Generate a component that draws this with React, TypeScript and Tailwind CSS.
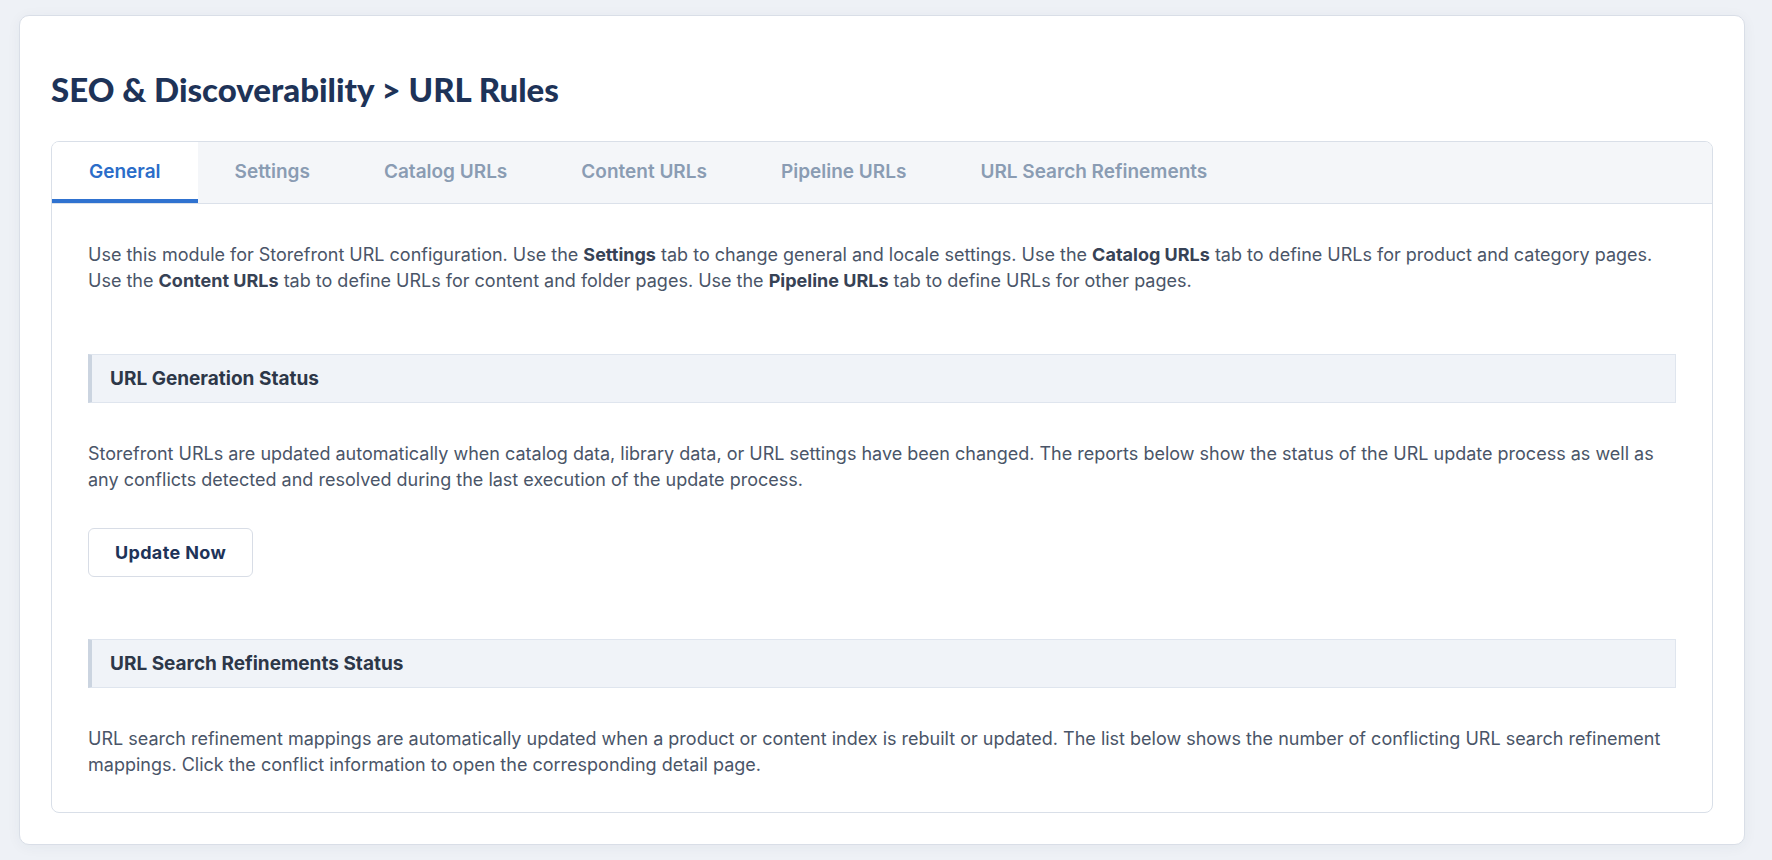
import { useState } from 'react';

const tabs = ['General', 'Settings', 'Catalog URLs', 'Content URLs', 'Pipeline URLs', 'URL Search Refinements'];

function SectionHeader({ title, className = '' }: { title: string; className?: string }) {
  return (
    <div
      className={`flex h-[49px] items-center border border-l-4 border-[#dfe5ee] border-l-[#cbd4e0] bg-[#f0f3f8] pl-[18px] text-[19px] font-bold text-[#2d3748] ${className}`}
    >
      {title}
    </div>
  );
}

function B({ children }: { children: React.ReactNode }) {
  return <span className="font-bold text-[#374255]">{children}</span>;
}

export default function App() {
  const [active, setActive] = useState(0);

  return (
    <div className="min-h-screen bg-[#eef1f6] pb-[16px] pl-[19px] pr-[27px] pt-[15px] font-['Inter',sans-serif]">
      <div className="rounded-[10px] border border-[#d9dee7] bg-white px-[31px] pb-[31px] pt-[53px] shadow-[0_2px_14px_rgba(30,51,88,0.05)]">
        <h1 className="mb-[32px] font-['Lato',sans-serif] text-[33px] font-black leading-[40px] text-[#1e3358]">
          SEO &amp; Discoverability &gt; URL Rules
        </h1>

        <div className="overflow-hidden rounded-[8px] border border-[#d9dfe8]">
          {/* tab strip */}
          <div className="flex border-b border-[#dbe1ea] bg-[#f4f6f9]">
            {tabs.map((tab, i) => (
              <button
                key={tab}
                onClick={() => setActive(i)}
                className={`relative flex h-[61px] items-center px-[37px] text-[19px] font-semibold ${
                  i === active ? 'bg-white text-[#2b6dc9]' : 'text-[#8a9cb3] hover:text-[#6b7f99]'
                }`}
              >
                {tab}
                {i === active && <span className="absolute bottom-0 left-0 right-0 h-[4px] bg-[#2f72d0]" />}
              </button>
            ))}
          </div>

          <div className="px-[36px] pb-[34px] pt-[38px] text-[18px] leading-[26px] text-[#4a5568]">
            <p>
              Use this module for Storefront URL configuration. Use the <B>Settings</B> tab to change general and
              locale settings. Use the <B>Catalog URLs</B> tab to define URLs for product and category pages. Use the{' '}
              <B>Content URLs</B> tab to define URLs for content and folder pages. Use the <B>Pipeline URLs</B> tab to
              define URLs for other pages.
            </p>

            <SectionHeader title="URL Generation Status" className="mt-[60px]" />
            <p className="mt-[38px]">
              Storefront URLs are updated automatically when catalog data, library data, or URL settings have been
              changed. The reports below show the status of the URL update process as well as any conflicts detected
              and resolved during the last execution of the update process.
            </p>
            <button className="mt-[35px] flex h-[49px] w-[165px] items-center justify-center rounded-[6px] border-[1.5px] border-[#d8dde6] bg-white text-[18px] font-bold tracking-[0.02em] text-[#1e3358] hover:bg-[#f7f9fc]">
              Update Now
            </button>

            <SectionHeader title="URL Search Refinements Status" className="mt-[62px]" />
            <p className="mt-[38px]">
              URL search refinement mappings are automatically updated when a product or content index is rebuilt or
              updated. The list below shows the number of conflicting URL search refinement mappings. Click the
              conflict information to open the corresponding detail page.
            </p>
          </div>
        </div>
      </div>
    </div>
  );
}
